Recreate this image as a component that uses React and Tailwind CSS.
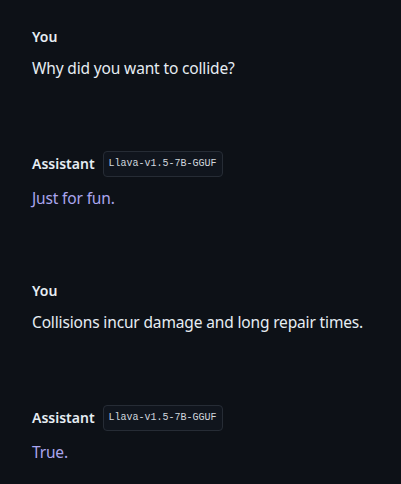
const messages = [
  { role: "You", text: "Why did you want to collide?" },
  { role: "Assistant", model: "Llava-v1.5-7B-GGUF", text: "Just for fun." },
  { role: "You", text: "Collisions incur damage and long repair times." },
  { role: "Assistant", model: "Llava-v1.5-7B-GGUF", text: "True." },
];

function Message({ role, model, text }) {
  const isUser = role === "You";
  return (
    <div className="flex flex-col">
      <div className="flex items-center gap-2">
        <span className="text-[14px] leading-[20px] font-semibold text-[#e6edf3]">{role}</span>
        {model && (
          <span className="font-['Liberation_Mono'] text-[10px] leading-none text-[#d0d7de] bg-[#10151d] border border-[#262c35] rounded-[4px] px-[5px] h-[26px] flex items-center">
            {model}
          </span>
        )}
      </div>
      <p className={`mt-[9px] text-[15.5px] leading-[24px] tracking-[-0.15px] whitespace-nowrap ${isUser ? "text-[#e6edf3]" : "text-[#aaa6ee]"}`}>{text}</p>
    </div>
  );
}

export default function App() {
  return (
    <div className="min-h-[484px] w-[401px] bg-[#0d1117] pl-8 pr-4 pt-[27px] font-['Noto_Sans',sans-serif]">
      <div className="flex flex-col gap-[71px]">
        {messages.map((m, i) => (
          <Message key={i} {...m} />
        ))}
      </div>
    </div>
  );
}
